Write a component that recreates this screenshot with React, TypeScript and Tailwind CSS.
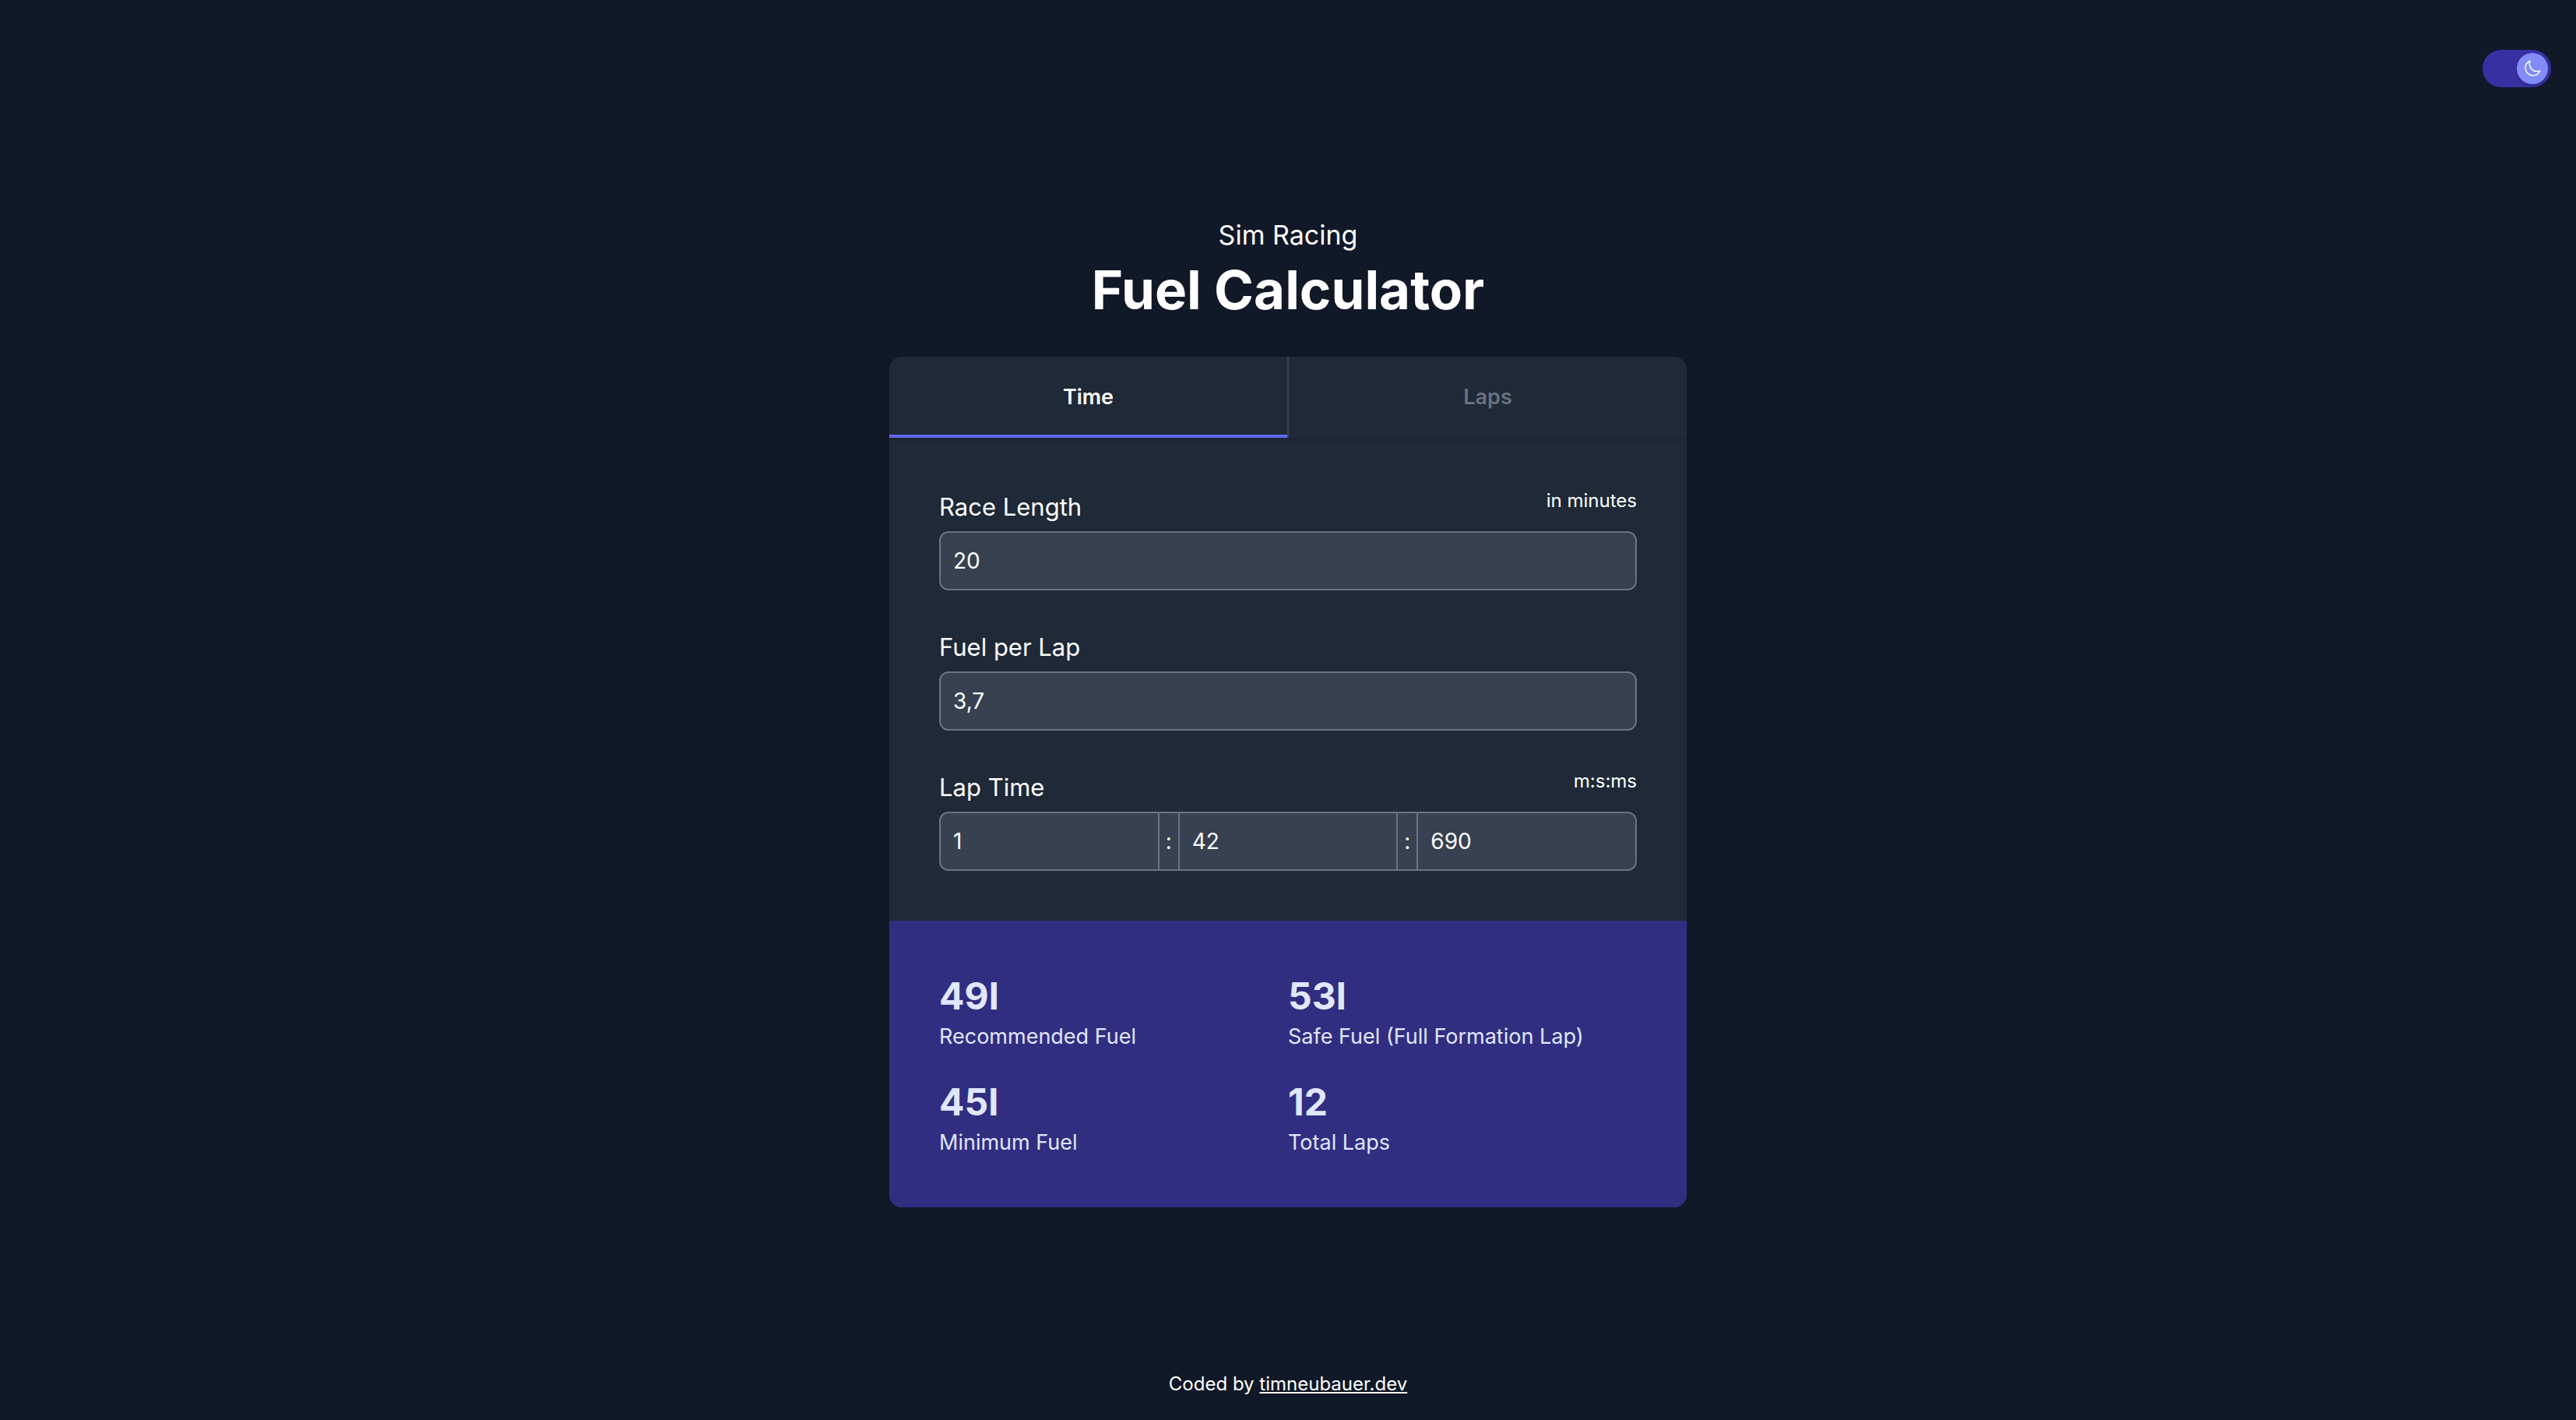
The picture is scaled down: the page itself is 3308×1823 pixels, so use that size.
import { useState } from "react";

const INPUT =
  "h-[76px] w-full min-w-0 border-2 border-[#6b7280] bg-[#374151] px-4 text-[28px] leading-10 text-white outline-none";

function NumberField({ id, label, hint, value }: { id: string; label: string; hint?: string; value: string }) {
  return (
    <div>
      <div className="flex items-start justify-between">
        <label htmlFor={id} className="text-[31px] leading-[50px]">
          {label}
        </label>
        {hint && <span className="text-2xl leading-[34px]">{hint}</span>}
      </div>
      <input id={id} type="text" inputMode="decimal" defaultValue={value} className={`${INPUT} mt-1.5 rounded-xl`} />
    </div>
  );
}

function Colon() {
  return (
    <span className="flex w-6 shrink-0 items-center justify-center border-y-2 border-[#6b7280] bg-[#374151] text-[28px] leading-10">
      :
    </span>
  );
}

function LapTimeField() {
  return (
    <div role="group" aria-labelledby="lap-time-label">
      <div className="flex items-start justify-between">
        <label id="lap-time-label" htmlFor="minutes" className="text-[31px] leading-[50px]">
          Lap Time
        </label>
        <span className="text-2xl leading-[34px]">m:s:ms</span>
      </div>
      <div className="mt-1.5 flex">
        <input id="minutes" type="text" defaultValue="1" className={`${INPUT} flex-1 rounded-l-xl`} />
        <Colon />
        <input aria-label="Seconds" type="text" defaultValue="42" className={`${INPUT} flex-1`} />
        <Colon />
        <input aria-label="Milliseconds" type="text" defaultValue="690" className={`${INPUT} flex-1 rounded-r-xl`} />
      </div>
    </div>
  );
}

const RESULTS = [
  { value: "49l", label: "Recommended Fuel" },
  { value: "53l", label: "Safe Fuel (Full Formation Lap)" },
  { value: "45l", label: "Minimum Fuel" },
  { value: "12", label: "Total Laps" },
];

export default function App() {
  const [tab, setTab] = useState("Time");
  const [dark, setDark] = useState(true);

  return (
    <div className="flex min-h-screen flex-col bg-[#111827] font-['Inter',sans-serif] text-white">
      <header className="flex justify-end px-8 pt-16">
        <button
          type="button"
          role="switch"
          aria-checked={dark}
          aria-label="Dark mode"
          onClick={() => setDark(!dark)}
          className={`flex h-12 w-[88px] items-center rounded-full bg-[#3730a3] p-1 ${dark ? "justify-end" : "justify-start"}`}
        >
          <span className="flex size-10 items-center justify-center rounded-full bg-[#818cf8] shadow-md">
            <svg
              viewBox="0 0 24 24"
              className="size-6"
              fill="none"
              stroke="currentColor"
              strokeWidth="1.5"
              strokeLinecap="round"
              strokeLinejoin="round"
              aria-hidden="true"
            >
              <path d="M21.752 15.002A9.718 9.718 0 0 1 18 15.75c-5.385 0-9.75-4.365-9.75-9.75 0-1.33.266-2.597.748-3.752A9.753 9.753 0 0 0 3 11.25C3 16.635 7.365 21 12.75 21a9.753 9.753 0 0 0 9.002-5.998Z" />
            </svg>
          </span>
        </button>
      </header>

      <main className="mx-auto mt-[162px] w-full max-w-[1024px]">
        <h1 className="flex flex-col text-center">
          <span className="text-[34px] leading-[56px] font-normal">Sim Racing</span>
          <span className="text-[69px] leading-[84px] font-bold">Fuel Calculator</span>
        </h1>

        <div className="mt-11 overflow-hidden rounded-2xl bg-[#1f2937]">
          <div role="tablist" className="flex shadow-[0_2px_6px_rgba(0,0,0,0.1)]">
            {["Time", "Laps"].map((name) => (
              <button
                key={name}
                type="button"
                role="tab"
                aria-selected={tab === name}
                onClick={() => setTab(name)}
                className={`h-[104px] flex-1 border-[#374151] text-[27px] leading-10 font-semibold last:border-l-2 ${
                  tab === name ? "text-white shadow-[inset_0_-4px_0_#6366f1]" : "text-[#6b7280]"
                }`}
              >
                {name}
              </button>
            ))}
          </div>

          <form className="flex flex-col gap-12 p-16">
            <NumberField id="race-length" label="Race Length" hint="in minutes" value="20" />
            <NumberField id="fuel-per-lap" label="Fuel per Lap" value="3,7" />
            <LapTimeField />
          </form>

          <dl className="grid grid-cols-2 gap-y-8 bg-[#312e81] p-16 text-[#e0e7ff]">
            {RESULTS.map((r) => (
              <div key={r.label} className="flex flex-col-reverse">
                <dt className="text-[27px] leading-[38px]">{r.label}</dt>
                <dd className="text-5xl leading-[66px] font-bold">{r.value}</dd>
              </div>
            ))}
          </dl>
        </div>
      </main>

      <footer className="mt-auto pb-[30px] text-center text-2xl">
        Coded by{" "}
        <a href="https://timneubauer.dev" className="underline">
          timneubauer.dev
        </a>
      </footer>
    </div>
  );
}
